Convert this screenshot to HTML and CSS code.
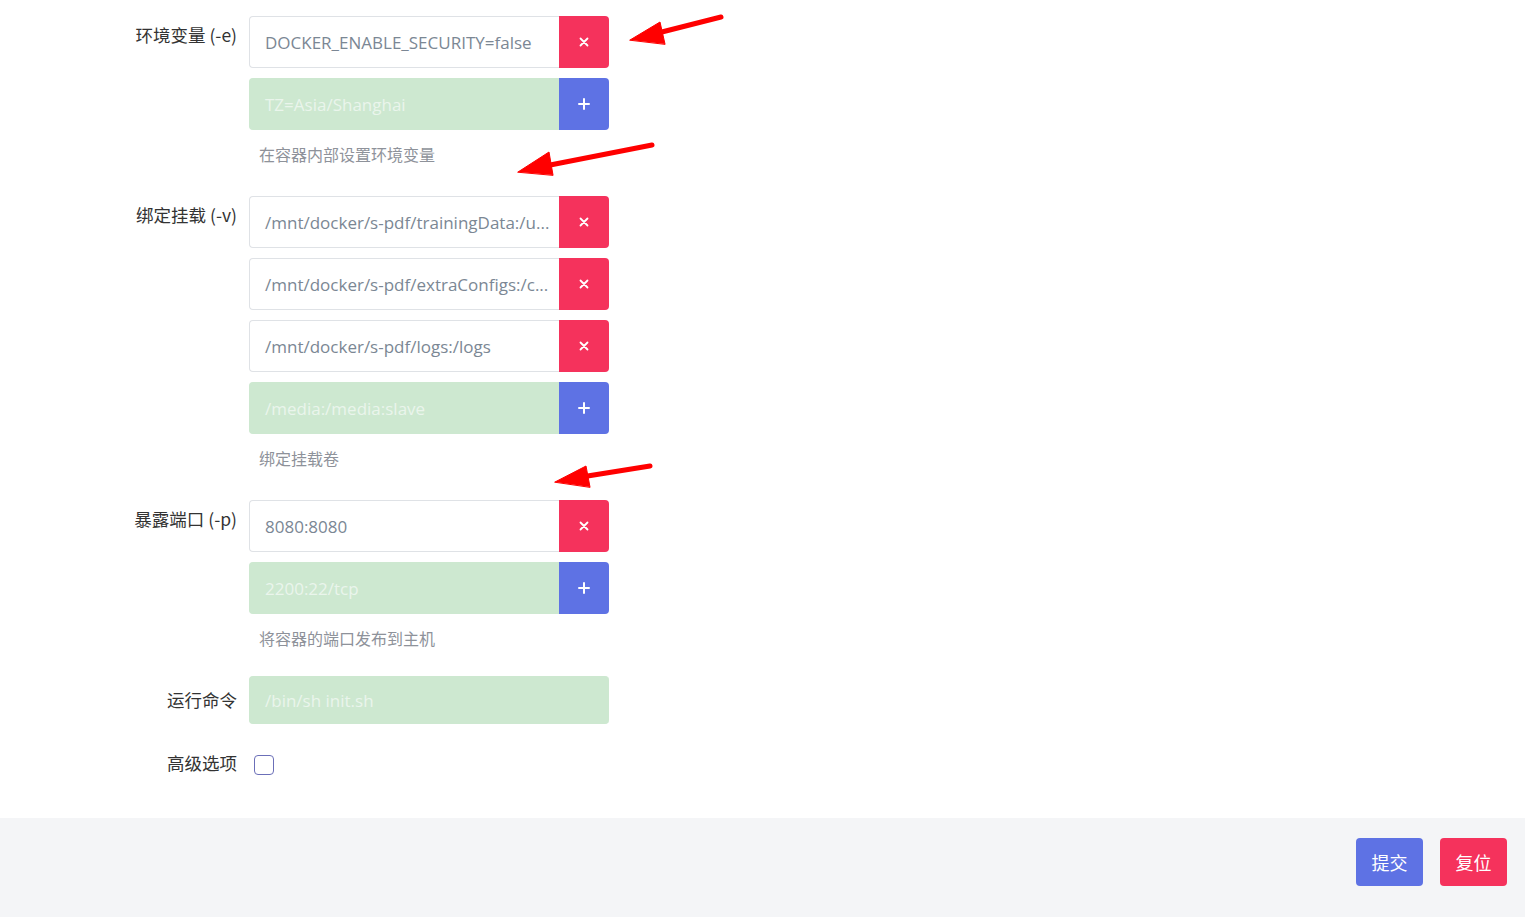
FILE: index.html
```html
<!DOCTYPE html>
<html lang="zh">
<head>
<meta charset="utf-8">
<link rel="stylesheet" href="styles.css">
</head>
<body>
<div class="page">
  <main class="form">
    <div class="group">
      <label class="label">环境变量 (-e)</label>
      <div class="field">
        <div class="ig">
          <div class="inp">DOCKER_ENABLE_SECURITY=false</div>
          <button class="btn del"><svg width="10" height="10" viewBox="0 0 10 10"><path d="M1.5 1.5L8.5 8.5M8.5 1.5L1.5 8.5" stroke="#fff" stroke-width="1.8" stroke-linecap="round"/></svg></button>
        </div>
        <div class="ig">
          <div class="inp ph">TZ=Asia/Shanghai</div>
          <button class="btn add"><svg width="12" height="12" viewBox="0 0 12 12"><path d="M6 1V11M1 6H11" stroke="#fff" stroke-width="2" stroke-linecap="round"/></svg></button>
        </div>
        <div class="help">在容器内部设置环境变量</div>
      </div>
    </div>

    <div class="group">
      <label class="label">绑定挂载 (-v)</label>
      <div class="field">
        <div class="ig">
          <div class="inp">/mnt/docker/s-pdf/trainingData:/u...</div>
          <button class="btn del"><svg width="10" height="10" viewBox="0 0 10 10"><path d="M1.5 1.5L8.5 8.5M8.5 1.5L1.5 8.5" stroke="#fff" stroke-width="1.8" stroke-linecap="round"/></svg></button>
        </div>
        <div class="ig">
          <div class="inp">/mnt/docker/s-pdf/extraConfigs:/c...</div>
          <button class="btn del"><svg width="10" height="10" viewBox="0 0 10 10"><path d="M1.5 1.5L8.5 8.5M8.5 1.5L1.5 8.5" stroke="#fff" stroke-width="1.8" stroke-linecap="round"/></svg></button>
        </div>
        <div class="ig">
          <div class="inp">/mnt/docker/s-pdf/logs:/logs</div>
          <button class="btn del"><svg width="10" height="10" viewBox="0 0 10 10"><path d="M1.5 1.5L8.5 8.5M8.5 1.5L1.5 8.5" stroke="#fff" stroke-width="1.8" stroke-linecap="round"/></svg></button>
        </div>
        <div class="ig">
          <div class="inp ph">/media:/media:slave</div>
          <button class="btn add"><svg width="12" height="12" viewBox="0 0 12 12"><path d="M6 1V11M1 6H11" stroke="#fff" stroke-width="2" stroke-linecap="round"/></svg></button>
        </div>
        <div class="help">绑定挂载卷</div>
      </div>
    </div>

    <div class="group">
      <label class="label">暴露端口 (-p)</label>
      <div class="field">
        <div class="ig">
          <div class="inp">8080:8080</div>
          <button class="btn del"><svg width="10" height="10" viewBox="0 0 10 10"><path d="M1.5 1.5L8.5 8.5M8.5 1.5L1.5 8.5" stroke="#fff" stroke-width="1.8" stroke-linecap="round"/></svg></button>
        </div>
        <div class="ig">
          <div class="inp ph">2200:22/tcp</div>
          <button class="btn add"><svg width="12" height="12" viewBox="0 0 12 12"><path d="M6 1V11M1 6H11" stroke="#fff" stroke-width="2" stroke-linecap="round"/></svg></button>
        </div>
        <div class="help">将容器的端口发布到主机</div>
      </div>
    </div>

    <div class="group center cmd">
      <label class="label">运行命令</label>
      <div class="field">
        <div class="inp ph full">/bin/sh init.sh</div>
      </div>
    </div>

    <div class="group center adv">
      <label class="label">高级选项</label>
      <div class="field">
        <span class="check"></span>
      </div>
    </div>
  </main>

  <footer class="footer">
    <button class="fbtn submit">提交</button>
    <button class="fbtn reset">复位</button>
  </footer>

  <svg class="arrows" width="1525" height="917" viewBox="0 0 1525 917">
    <g fill="#f00" stroke="#f00" stroke-linecap="round">
      <line x1="721" y1="17" x2="650" y2="35" stroke-width="5"/>
      <polygon points="630,40 660,22 665,44" stroke-width="1"/>
      <line x1="652" y1="145" x2="540" y2="167" stroke-width="5"/>
      <polygon points="518,172 549,152 553,175" stroke-width="1"/>
      <line x1="650" y1="466" x2="575" y2="478" stroke-width="5"/>
      <polygon points="555,482 586,466 590,487" stroke-width="1"/>
    </g>
  </svg>
</div>
</body>
</html>
```

FILE: styles.css
```css
* { box-sizing: border-box; }
html, body {
  margin: 0;
  padding: 0;
  background: #fff;
}
body {
  font-family: "Open Sans", "Noto Sans CJK SC", sans-serif;
  color: #32325d;
}
.page {
  position: relative;
  width: 1525px;
  height: 917px;
  overflow: hidden;
}
.form {
  height: 818px;
  padding-top: 16px;
  display: flex;
  flex-direction: column;
}
.group {
  display: flex;
  gap: 12px;
  margin-bottom: 32px;
}
.label {
  width: 237px;
  flex: none;
  text-align: right;
  font-family: "Noto Sans CJK SC", "Open Sans", sans-serif;
  font-size: 17.5px;
  line-height: 24px;
  color: #333;
  padding-top: 7px;
}
.field {
  width: 360px;
  display: flex;
  flex-direction: column;
  gap: 10px;
}
.ig {
  display: flex;
  height: 52px;
}
.inp {
  flex: 1;
  min-width: 0;
  height: 52px;
  border: 1px solid #dfe2e6;
  border-radius: 4px 0 0 4px;
  border-right: none;
  padding: 0 15px;
  display: flex;
  align-items: center;
  font-size: 17px;
  color: #7b8794;
  white-space: nowrap;
  overflow: hidden;
  background: #fff;
}
.inp.ph {
  background: #cde8d0;
  border-color: #cde8d0;
  color: #eaf5ec;
}
.inp.full {
  flex: none;
  border-radius: 4px;
  height: 48px;
}
.btn {
  width: 50px;
  flex: none;
  border: none;
  border-radius: 0 4px 4px 0;
  display: flex;
  align-items: center;
  justify-content: center;
  padding: 0;
}
.btn.del { background: #f5325c; }
.btn.add { background: #5e72e4; }
.help {
  margin-top: 4px;
  padding-left: 10px;
  font-family: "Noto Sans CJK SC", sans-serif;
  font-size: 16px;
  line-height: 20px;
  color: #8e929a;
}
.group.center { align-items: center; }
.group.center .label { padding-top: 0; }
.cmd { margin-top: -4px; margin-bottom: 27px; }
.check {
  display: block;
  width: 20px;
  height: 20px;
  margin-left: 5px;
  margin-top: 3px;
  border: 1px solid #6b6fb8;
  border-radius: 4px;
  background: #fff;
}
.footer {
  height: 99px;
  background: #f4f5f7;
  display: flex;
  justify-content: flex-end;
  align-items: flex-start;
  gap: 17px;
  padding: 20px 18px 0 0;
}
.fbtn {
  width: 67px;
  height: 48px;
  border: none;
  border-radius: 4px;
  color: #fff;
  font-family: "Noto Sans CJK SC", sans-serif;
  font-size: 18px;
  padding: 0;
}
.fbtn.submit { background: #5e72e4; }
.fbtn.reset { background: #f5325c; }
.arrows {
  position: absolute;
  left: 0;
  top: 0;
  pointer-events: none;
}
```
